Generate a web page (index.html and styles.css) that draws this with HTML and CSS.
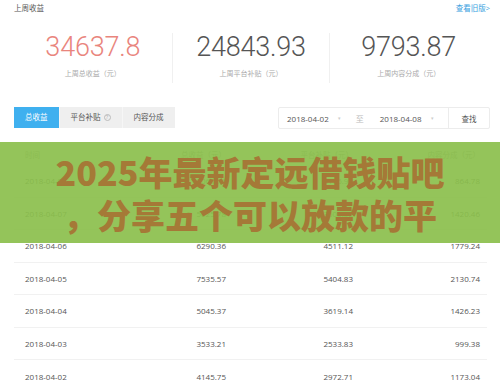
FILE: index.html
```html
<!DOCTYPE html>
<html lang="zh-CN">
<head>
<meta charset="utf-8">
<title>上周收益</title>
<link rel="stylesheet" href="styles.css">
</head>
<body>
<div class="page">
  <div class="top">
    <span class="top-title">上周收益</span>
    <a class="top-link">查看旧版&gt;</a>
  </div>

  <div class="stats">
    <div class="stat">
      <div class="stat-num red">34637.8</div>
      <div class="stat-label">上周总收益（元）</div>
    </div>
    <div class="stat">
      <div class="stat-num">24843.93</div>
      <div class="stat-label">上周平台补贴（元）</div>
    </div>
    <div class="stat">
      <div class="stat-num">9793.87</div>
      <div class="stat-label">上周内容分成（元）</div>
    </div>
  </div>

  <div class="toolbar">
    <div class="tabs">
      <div class="tab active">总收益</div>
      <div class="tab">平台补贴<span class="qmark">?</span></div>
      <div class="tab">内容分成</div>
    </div>
    <div class="range">
      <span class="date">2018-04-02</span><span class="caret">▾</span>
      <span class="to">至</span>
      <span class="date">2018-04-08</span><span class="caret">▾</span>
      <span class="search">查找</span>
    </div>
  </div>

  <div class="table">
    <div class="row head">
      <div class="c1">时间</div><div class="cn">总收益（元）</div><div class="cn">平台补贴（元）</div><div class="cn">内容分成（元）</div>
    </div>
    <div class="row"><div class="c1">2018-04-08</div><div class="cn">3061.76</div><div class="cn">2196.98</div><div class="cn">864.78</div></div>
    <div class="row"><div class="c1">2018-04-07</div><div class="cn">5025.78</div><div class="cn">3605.32</div><div class="cn">1420.46</div></div>
    <div class="row"><div class="c1">2018-04-06</div><div class="cn">6290.36</div><div class="cn">4511.12</div><div class="cn">1779.24</div></div>
    <div class="row"><div class="c1">2018-04-05</div><div class="cn">7535.57</div><div class="cn">5404.83</div><div class="cn">2130.74</div></div>
    <div class="row"><div class="c1">2018-04-04</div><div class="cn">5045.37</div><div class="cn">3619.14</div><div class="cn">1426.23</div></div>
    <div class="row"><div class="c1">2018-04-03</div><div class="cn">3533.21</div><div class="cn">2533.83</div><div class="cn">999.38</div></div>
    <div class="row"><div class="c1">2018-04-02</div><div class="cn">4145.75</div><div class="cn">2972.71</div><div class="cn">1173.04</div></div>
  </div>

  <div class="banner">
    <div class="banner-text">2025年最新定远借钱贴吧<br>，分享五个可以放款的平</div>
  </div>
</div>
</body>
</html>
```

FILE: styles.css
```css
* { box-sizing: border-box; margin: 0; padding: 0; }
html, body { background: #fff; }
body {
  font-family: "Open Sans", "Noto Sans CJK SC", sans-serif;
  color: #555;
  width: 500px;
  height: 388px;
  overflow: hidden;
}
.page {
  position: relative;
  padding: 0 13px 0 14px;
}
.top {
  display: flex;
  justify-content: space-between;
  align-items: center;
  height: 14px;
  font-size: 7.5px;
  padding-top: 1px;
}
.top-title { color: #555; }
.top-link { color: #3a9fe0; margin-right: -3px; }

.stats {
  display: grid;
  grid-template-columns: 1fr 1fr 1fr;
  margin-top: 19px;
  height: 50px;
}
.stat {
  text-align: center;
  border-left: 1px solid #f0f0f0;
}
.stat:first-child { border-left: none; }
.stat-num {
  font-family: Roboto, "Open Sans", sans-serif;
  font-weight: 300;
  font-size: 27px;
  line-height: 28px;
  color: #555;
  letter-spacing: -0.2px;
}
.stat-num.red { color: #e9857d; }
.stat-label {
  margin-top: 8px;
  font-size: 7px;
  line-height: 10px;
  color: #aaa;
}

.toolbar {
  display: flex;
  justify-content: space-between;
  margin-top: 24px;
}
.tabs { display: flex; }
.tab {
  height: 21px;
  line-height: 21px;
  padding: 0 11px;
  font-size: 7.5px;
  color: #555;
  background: #efefef;
  display: flex;
  align-items: center;
}
.tab + .tab { border-left: 1px solid #f6f6f6; }
.tab.active { background: #3fb0ef; color: #fff; }
.qmark {
  display: inline-flex;
  align-items: center;
  justify-content: center;
  width: 7px;
  height: 7px;
  border: 1px solid #bbb;
  border-radius: 50%;
  font-size: 5px;
  color: #aaa;
  margin-left: 3px;
}
.range {
  display: flex;
  align-items: center;
  height: 22px;
  width: 212px;
  margin-right: -3px;
  border: 1px solid #ececec;
  border-radius: 2px;
  font-size: 8px;
  color: #555;
  padding-left: 8px;
}
.date { color: #555; }
.caret { color: #ccc; font-size: 5px; margin-left: 9px; }
.to { color: #bbb; margin: 0 16px 0 15px; }
.search {
  margin-left: auto;
  width: 41px;
  height: 100%;
  border-left: 1px solid #ececec;
  display: flex;
  align-items: center;
  justify-content: center;
  font-size: 7.5px;
}

.table { margin-top: 14px; width: 473px; }
.row {
  display: grid;
  grid-template-columns: 92px 127px 127px 127px;
  height: 32.5px;
  align-items: center;
  font-size: 8px;
  color: #555;
  border-bottom: 1px solid #f1f1f1;
}
.row.head {
  height: 22px;
  background: #f7f7f7;
  color: #999;
  border-bottom: none;
  font-size: 7.5px;
}
.row:last-child { border-bottom: none; }
.c1 { padding-left: 11px; }
.cn { text-align: right; padding-right: 7px; }

.banner {
  position: absolute;
  left: 0;
  top: 142px;
  width: 500px;
  height: 101px;
  background: rgba(139, 191, 76, 0.92);
  display: flex;
  align-items: center;
  justify-content: center;
}
.banner-text {
  font-family: "Noto Sans CJK SC", sans-serif;
  font-weight: 900;
  font-size: 34px;
  line-height: 43px;
  color: #a57937;
  text-align: center;
  white-space: nowrap;
}
```
